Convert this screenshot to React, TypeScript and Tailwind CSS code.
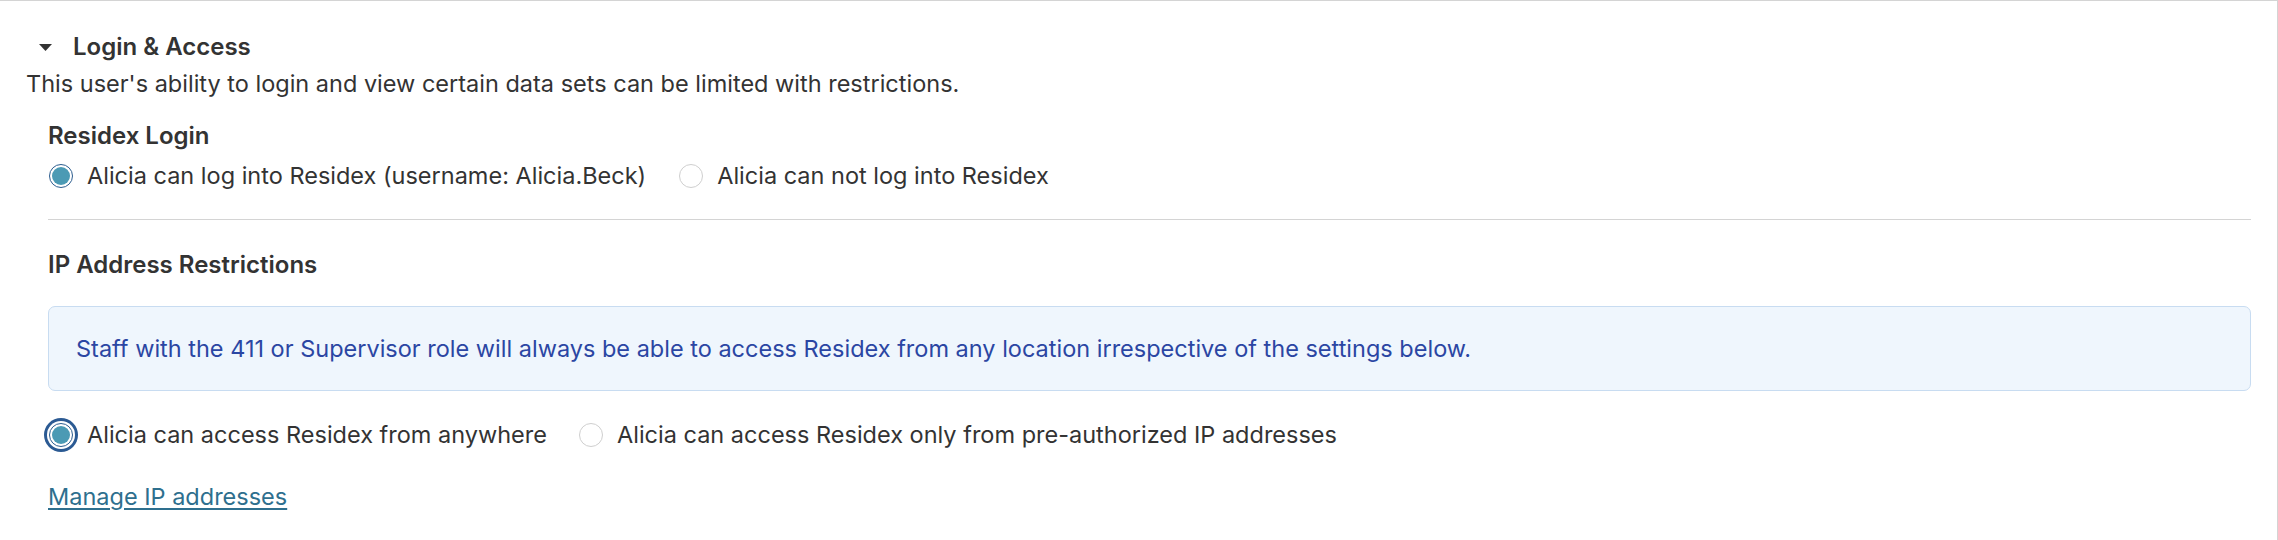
import React from 'react';

function Radio({ checked, focused }: { checked?: boolean; focused?: boolean }) {
  if (!checked) {
    return <span className="block w-6 h-6 rounded-full border border-[#cfcfcf] bg-white shrink-0" />;
  }
  return (
    <span
      className={
        focused
          ? 'block w-6 h-6 rounded-full border-[1.5px] border-[#2c5d8f] bg-white p-[2px] shrink-0 ring-[3px] ring-[#2b5a93] ring-offset-[2px] ring-offset-white'
          : 'block w-6 h-6 rounded-full border-[1.5px] border-[#2c5d8f] bg-white p-[2px] shrink-0'
      }
    >
      <span className="block w-full h-full rounded-full bg-[#4b9ab4]" />
    </span>
  );
}

function Option({ label, checked, focused }: { label: string; checked?: boolean; focused?: boolean }) {
  return (
    <label className="flex items-center gap-[14px]">
      <Radio checked={checked} focused={focused} />
      <span>{label}</span>
    </label>
  );
}

export default function App() {
  return (
    <div
      className="w-full h-[540px] bg-white border-t border-r border-[#d4d4d4] text-[#333333] text-[23.5px] leading-[30px]"
      style={{ fontFamily: 'Inter, "Noto Sans", sans-serif' }}
    >
      <div className="pt-[31px] pl-[26px] pr-[26px]">
        <div className="flex items-center pl-[13px]">
          <svg width="13" height="7" viewBox="0 0 13 7" className="mr-[21px]">
            <path d="M0 0 L13 0 L6.5 7 Z" fill="#333333" />
          </svg>
          <h2 className="font-semibold text-[24px]">Login &amp; Access</h2>
        </div>
        <p className="mt-[7px]">This user's ability to login and view certain data sets can be limited with restrictions.</p>

        <div className="ml-[22px]">
          <h3 className="mt-[22px] font-semibold text-[24px]">Residex Login</h3>
          <div className="mt-[10px] flex items-center gap-[33px] pl-[1px]">
            <Option checked label="Alicia can log into Residex (username: Alicia.Beck)" />
            <Option label="Alicia can not log into Residex" />
          </div>

          <div className="mt-[28px] h-px bg-[#d4d4d4]" />

          <h3 className="mt-[30px] font-semibold text-[24px]">IP Address Restrictions</h3>

          <div className="mt-[26px] h-[85px] flex items-center px-[27px] rounded-[7px] border border-[#c8dcf1] bg-[#eff6fd] text-[#2b46a3]">
            Staff with the 411 or Supervisor role will always be able to access Residex from any location irrespective of the settings below.
          </div>

          <div className="mt-[29px] flex items-center gap-[32px] pl-[1px]">
            <Option checked focused label="Alicia can access Residex from anywhere" />
            <Option label="Alicia can access Residex only from pre-authorized IP addresses" />
          </div>

          <a href="#" className="block w-fit mt-[32px] text-[#2e6f8e] underline underline-offset-[3px]">
            Manage IP addresses
          </a>
        </div>
      </div>
    </div>
  );
}
